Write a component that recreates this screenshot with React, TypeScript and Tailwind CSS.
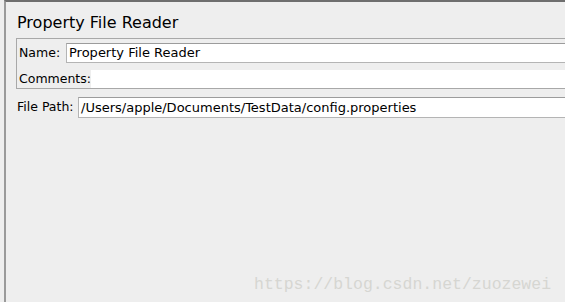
export default function App() {
  return (
    <div
      className="relative h-[302px] w-[565px] overflow-hidden bg-[#eeeeee] text-black"
      style={{ fontFamily: '"DejaVu Sans", sans-serif' }}
    >
      <div className="ml-[4px] h-full border-l-2 border-t-2 border-l-[#9a9a9a] border-t-[#6e6e6e] pl-[10px]">
        <h1 className="mt-[8px] h-[26px] pl-[1px] text-[16px] leading-[26px]">Property File Reader</h1>

        {/* name / comments group */}
        <div className="-mr-[4px] mt-[2px] border border-[#a8a8a8] pt-[4px] pl-[2px]">
          <div className="flex h-[20px] items-center">
            <span className="w-[47px] shrink-0 whitespace-nowrap text-[12.5px]">Name:</span>
            <div className="flex h-[20px] flex-1 items-center border border-r-0 border-[#b4b4b4] border-t-[#9c9c9c] bg-white pl-[2px] text-[13px]">
              Property File Reader
            </div>
          </div>
          <div className="mt-[7px] flex h-[18px] items-center">
            <span className="shrink-0 whitespace-nowrap text-[12.5px]">Comments:</span>
            <div className="h-[18px] flex-1 bg-white" />
          </div>
        </div>

        <div className="mt-[8px] flex h-[21px] items-center">
          <span className="w-[62px] shrink-0 whitespace-nowrap pl-[1px] text-[12.5px]">File Path:</span>
          <div className="flex h-[21px] flex-1 items-center border border-r-0 border-[#b4b4b4] border-t-[#9c9c9c] bg-white pl-[2px] text-[13px]">
            /Users/apple/Documents/TestData/config.properties
          </div>
        </div>
      </div>

      <span
        className="absolute left-[254px] top-[275px] text-[16.5px] leading-[20px] text-[#d6d6d2]"
        style={{ fontFamily: '"Liberation Mono", monospace' }}
      >
        https://blog.csdn.net/zuozewei
      </span>
    </div>
  );
}
